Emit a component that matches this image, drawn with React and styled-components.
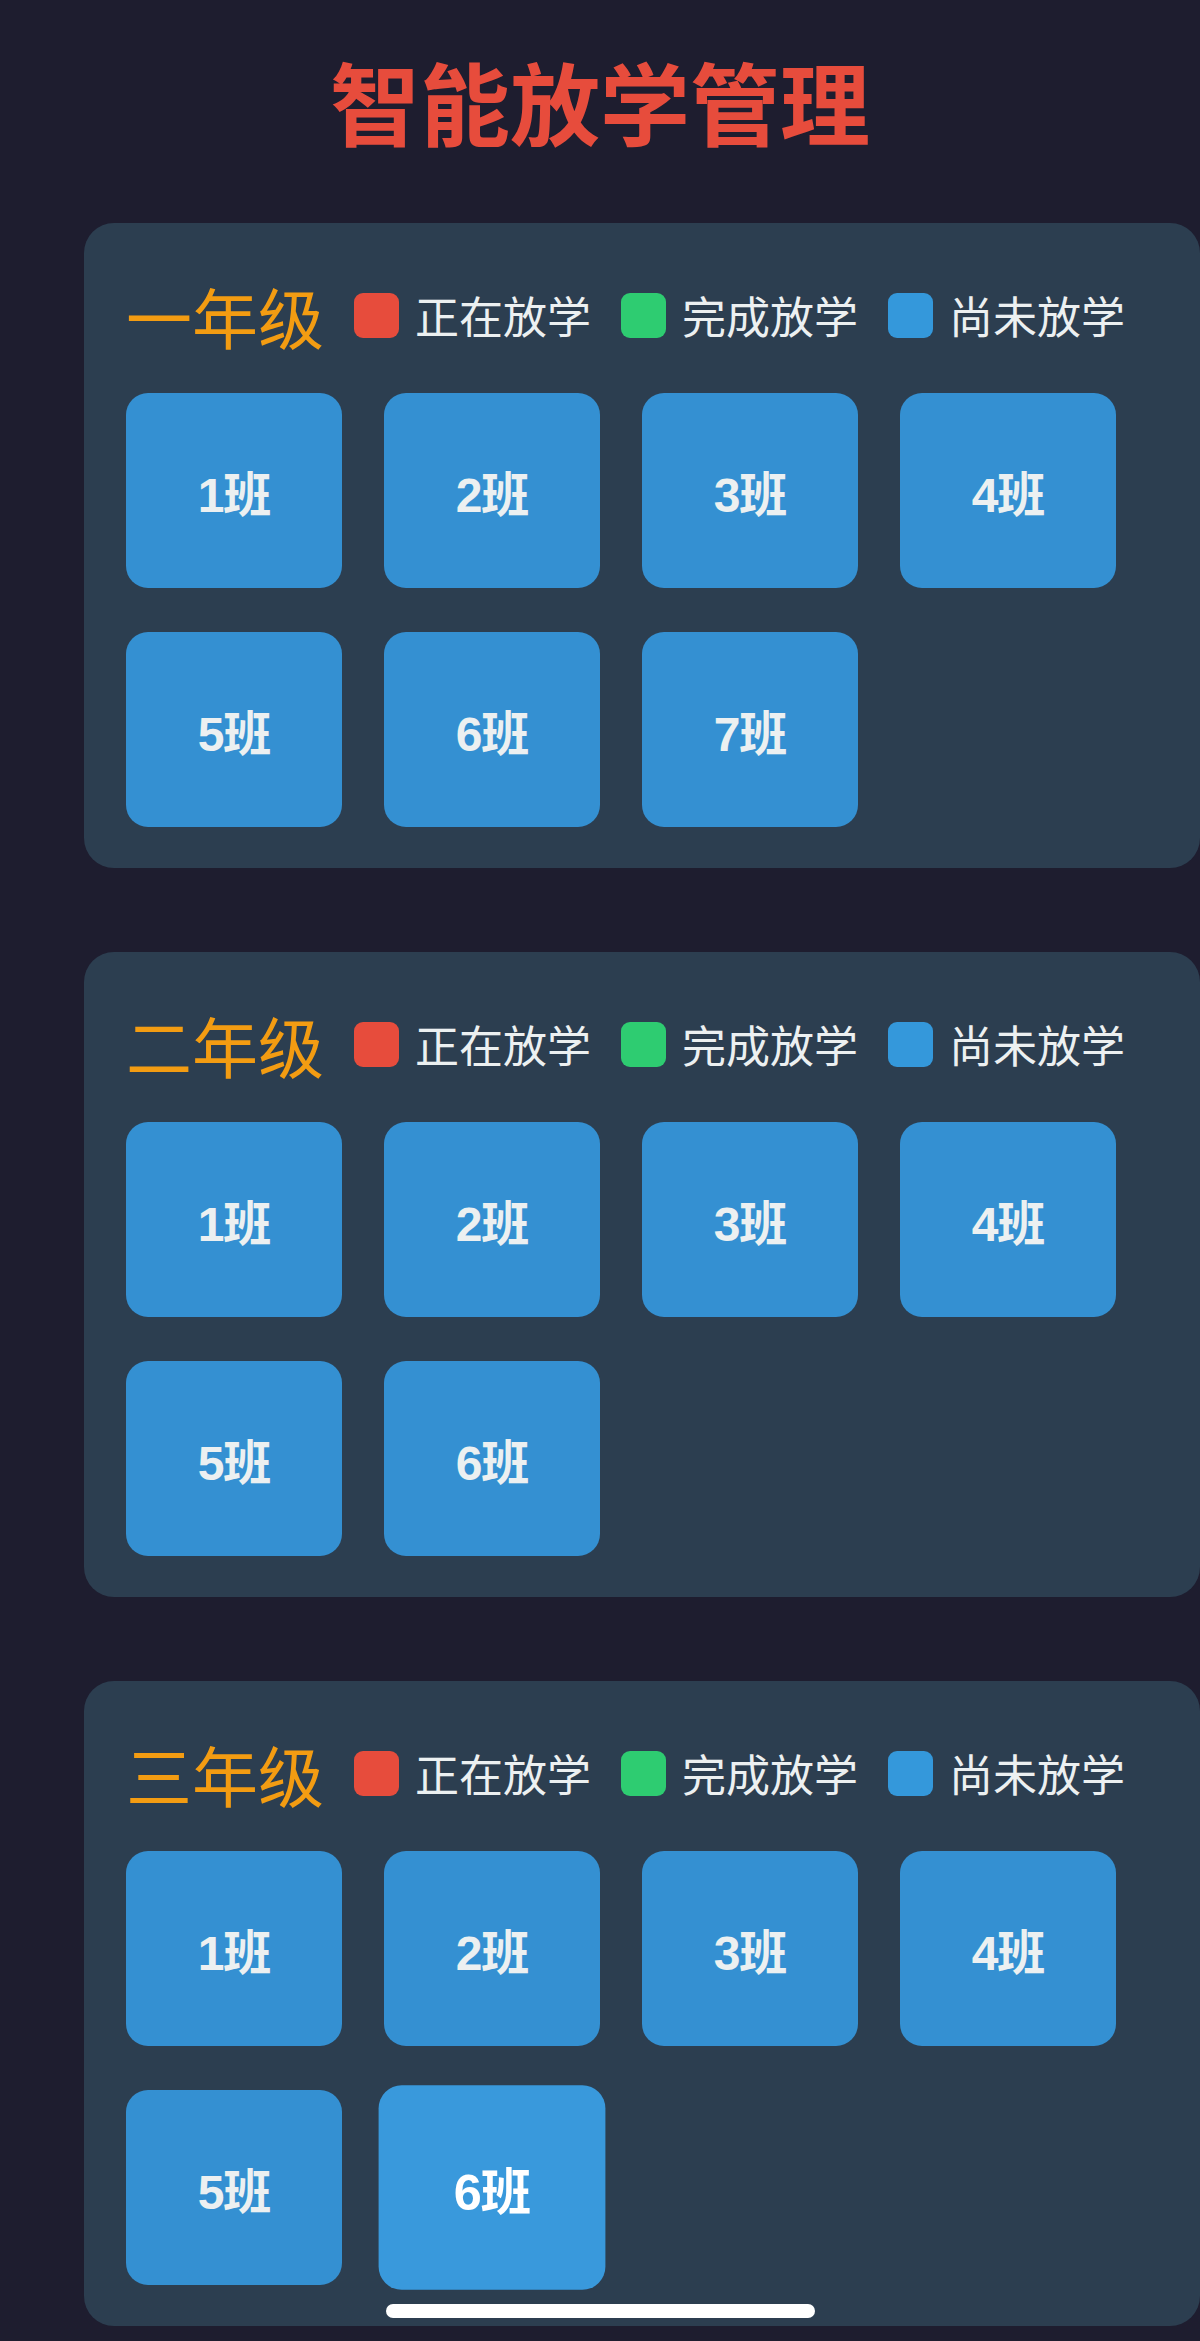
import React from "react";
import styled, { createGlobalStyle } from "styled-components";

const GlobalStyle = createGlobalStyle`
  html, body {
    margin: 0;
    padding: 0;
    background: #1e1d2f;
  }
  * {
    box-sizing: border-box;
  }
`;

const Page = styled.div`
  position: relative;
  width: 1200px;
  min-height: 2341px;
  padding-top: 37px;
  background: #1e1d2f;
  font-family: "Noto Sans CJK SC", "Noto Sans", sans-serif;
  overflow: hidden;
`;

const Title = styled.h1`
  margin: 0 0 60px;
  text-align: center;
  font-size: 90px;
  line-height: 126px;
  font-weight: 700;
  color: #e74c3c;
  letter-spacing: 0;
`;

const GradeList = styled.div`
  display: flex;
  flex-direction: column;
  gap: 84px;
  padding-left: 84px;
`;

const Panel = styled.section`
  width: 1116px;
  height: 645px;
  padding: 42px 42px 41px;
  background: #2c3e50;
  border-radius: 30px;
`;

const Header = styled.div`
  display: flex;
  align-items: center;
  height: 100px;
  margin-bottom: 28px;
`;

const GradeName = styled.h2`
  margin: 0 30px 0 0;
  font-size: 66px;
  line-height: 100px;
  font-weight: 400;
  color: #f39c12;
`;

const Legend = styled.div`
  display: flex;
  align-items: center;
  gap: 30px;
`;

const LegendItem = styled.div`
  display: flex;
  align-items: center;
  gap: 16px;
  font-size: 44px;
  line-height: 60px;
  color: #ecf0f1;
`;

const Swatch = styled.span`
  width: 45px;
  height: 45px;
  border-radius: 9px;
  background: ${(props) => props.color};
`;

const ClassGrid = styled.div`
  display: grid;
  grid-template-columns: repeat(4, 216px);
  grid-auto-rows: 195px;
  column-gap: 42px;
  row-gap: 44px;
`;

const ClassButton = styled.button`
  display: flex;
  align-items: center;
  justify-content: center;
  border: none;
  border-radius: 22px;
  padding: 0;
  font-family: "Liberation Sans", "Noto Sans CJK SC", sans-serif;
  font-size: 48px;
  font-weight: 700;
  letter-spacing: -1px;
  cursor: pointer;
  color: ${(props) => (props.active ? "#ffffff" : "#ecf0f1")};
  background: ${(props) => (props.active ? "#3999dc" : "#3490d2")};
  transform: ${(props) => (props.active ? "scale(1.05)" : "none")};
`;

const HomeIndicator = styled.div`
  position: absolute;
  left: 386px;
  bottom: 23px;
  width: 429px;
  height: 14px;
  border-radius: 7px;
  background: #ffffff;
`;

const legend = [
  { label: "正在放学", color: "#e74c3c" },
  { label: "完成放学", color: "#2ecc71" },
  { label: "尚未放学", color: "#3498db" },
];

const grades = [
  { name: "一年级", classes: 7 },
  { name: "二年级", classes: 6 },
  { name: "三年级", classes: 6, active: 6 },
];

const GradePanel = ({ name, classes, active }) => (
  <Panel>
    <Header>
      <GradeName>{name}</GradeName>
      <Legend>
        {legend.map((item) => (
          <LegendItem key={item.label}>
            <Swatch color={item.color} />
            {item.label}
          </LegendItem>
        ))}
      </Legend>
    </Header>
    <ClassGrid>
      {Array.from({ length: classes }, (_, i) => (
        <ClassButton key={i} active={active === i + 1 ? 1 : 0}>
          {i + 1}班
        </ClassButton>
      ))}
    </ClassGrid>
  </Panel>
);

export default function App() {
  return (
    <>
      <GlobalStyle />
      <Page>
        <Title>智能放学管理</Title>
        <GradeList>
          {grades.map((g) => (
            <GradePanel key={g.name} {...g} />
          ))}
        </GradeList>
        <HomeIndicator />
      </Page>
    </>
  );
}
